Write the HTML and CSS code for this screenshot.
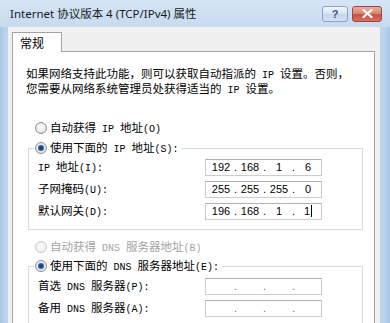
FILE: index.html
```html
<!DOCTYPE html>
<html lang="zh-CN">
<head>
<meta charset="utf-8">
<title>Internet 协议版本 4 (TCP/IPv4) 属性</title>
<link rel="stylesheet" href="styles.css">
</head>
<body>
<div class="win">
  <div class="titlebar">
    <span class="title">Internet 协议版本 4 (TCP/IPv4) 属性</span>
    <div class="tbtns">
      <span class="btn help">?</span>
      <span class="btn close"><svg width="11" height="9" viewBox="0 0 11 9"><path d="M1.5 1 L9.5 8 M9.5 1 L1.5 8" stroke="#fff" stroke-width="2.2" stroke-linecap="round"/></svg></span>
    </div>
  </div>
  <div class="body">
    <div class="tab">常规</div>
    <div class="panel">
      <p class="desc">如果网络支持此功能，则可以获取自动指派的<span class="en"> IP </span>设置。否则，<br>您需要从网络系统管理员处获得适当的<span class="en"> IP </span>设置。</p>
      <div class="opt first"><span class="radio"></span><span>自动获得<span class="en"> IP </span>地址<span class="en">(O)</span></span></div>
      <fieldset class="group">
        <legend><span class="radio on"></span><span>使用下面的<span class="en"> IP </span>地址<span class="en">(S):</span></span></legend>
        <div class="row"><span class="lbl"><span class="en">IP </span>地址<span class="en">(I):</span></span><div class="ip"><span class="o">192</span><span class="d">.</span><span class="o">168</span><span class="d">.</span><span class="o">1</span><span class="d">.</span><span class="o">6</span></div></div>
        <div class="row"><span class="lbl">子网掩码<span class="en">(U):</span></span><div class="ip"><span class="o">255</span><span class="d">.</span><span class="o">255</span><span class="d">.</span><span class="o">255</span><span class="d">.</span><span class="o">0</span></div></div>
        <div class="row"><span class="lbl">默认网关<span class="en">(D):</span></span><div class="ip"><span class="o">196</span><span class="d">.</span><span class="o">168</span><span class="d">.</span><span class="o">1</span><span class="d">.</span><span class="o">1<i class="caret"></i></span></div></div>
      </fieldset>
      <div class="opt disabled"><span class="radio off"></span><span>自动获得<span class="en"> DNS </span>服务器地址<span class="en">(B)</span></span></div>
      <fieldset class="group dns">
        <legend><span class="radio on"></span><span>使用下面的<span class="en"> DNS </span>服务器地址<span class="en">(E):</span></span></legend>
        <div class="row"><span class="lbl">首选<span class="en"> DNS </span>服务器<span class="en">(P):</span></span><div class="ip empty"><span class="o"></span><span class="d">.</span><span class="o"></span><span class="d">.</span><span class="o"></span><span class="d">.</span><span class="o"></span></div></div>
        <div class="row"><span class="lbl">备用<span class="en"> DNS </span>服务器<span class="en">(A):</span></span><div class="ip empty"><span class="o"></span><span class="d">.</span><span class="o"></span><span class="d">.</span><span class="o"></span><span class="d">.</span><span class="o"></span></div></div>
      </fieldset>
    </div>
  </div>
</div>
</body>
</html>
```
FILE: styles.css
```css
html, body {
  margin: 0;
  padding: 0;
}
body {
  width: 390px;
  height: 323px;
  overflow: hidden;
  background: #b9d1ea;
}
.win {
  width: 390px;
  height: 323px;
  display: flex;
  flex-direction: column;
  overflow: hidden;
  background: linear-gradient(90deg, #a9c5e6 0, #bcd3ec 6px, #c4d8ee 50%, #bcd3ec calc(100% - 6px), #a9c5e6 100%);
  font-family: "Noto Sans CJK SC", sans-serif;
  color: #000;
}
.en {
  font-family: "Liberation Mono", monospace;
  font-size: 10px;
  white-space: pre;
}
.titlebar {
  height: 27px;
  flex: none;
  display: flex;
  align-items: center;
  justify-content: space-between;
  padding: 0 8px 0 10px;
  background: linear-gradient(#d6e5f5, #c6daef);
}
.title {
  font: 11.5px/16px "Noto Sans", "Noto Sans CJK SC", sans-serif;
  color: #1b1b1b;
}
.tbtns {
  display: flex;
  gap: 4px;
}
.btn {
  height: 16px;
  box-sizing: border-box;
  border-radius: 3px;
  display: flex;
  align-items: center;
  justify-content: center;
}
.help {
  width: 26px;
  border: 1px solid #8ca2c0;
  background: linear-gradient(#eef4fb, #d9e5f3 50%, #c3d5ea 51%, #d3e1f1);
  color: #3d5679;
  font: bold 11px/14px "Liberation Sans", sans-serif;
}
.close {
  width: 30px;
  border: 1px solid #99473f;
  background: linear-gradient(#e9ada0, #d88273 50%, #c6513f 51%, #d6705c);
}
.body {
  flex: 1;
  margin: 0 10px 0 8px;
  background: #f0f0f0;
  padding: 5px 5px 0 4px;
  display: flex;
  flex-direction: column;
}
.tab {
  width: 50px;
  height: 20px;
  box-sizing: border-box;
  border: 1px solid #a3a3a3;
  border-bottom: none;
  background: #fff;
  margin-bottom: -1px;
  position: relative;
  z-index: 1;
  padding-left: 7px;
  font: 12px/19px "Noto Sans CJK SC", sans-serif;
}
.panel {
  flex: 1;
  background: #fff;
  border: 1px solid #a3a3a3;
  padding: 15px 11px 0 15px;
}
.desc {
  margin: 0 0 0 -2px;
  font-size: 11.5px;
  line-height: 12px;
  white-space: nowrap;
}
.opt {
  display: flex;
  align-items: center;
  height: 20px;
  padding-left: 7px;
  gap: 3px;
  font-size: 11.5px;
  line-height: 14px;
}
.opt.first {
  margin-top: 21px;
}
.opt.disabled {
  margin-top: 7px;
  color: #a3a3a3;
}
.radio {
  width: 12px;
  height: 12px;
  box-sizing: border-box;
  border-radius: 50%;
  border: 1px solid #8d8f92;
  background: radial-gradient(circle at 50% 45%, #ffffff 0, #ececec 55%, #d4d4d4 100%);
  flex: none;
}
.radio.on {
  background: radial-gradient(circle at 50% 50%, #16325c 0, #2c5890 2px, #5d8cc3 3px, rgba(255,255,255,0) 3.6px),
              radial-gradient(circle at 50% 45%, #ffffff 0, #ececec 55%, #d4d4d4 100%);
}
.radio.off {
  border-color: #c9cacc;
  background: radial-gradient(circle at 50% 45%, #fcfcfc 0, #f2f2f2 60%, #e8e8e8 100%);
}
.group {
  margin: 2px 0 0;
  border: 1px solid #d5dbe1;
  padding: 0 0 7px 5px;
  min-width: 0;
}
.group legend {
  padding: 0 3px 0 1px;
  height: 16px;
  display: flex;
  align-items: center;
  gap: 3px;
  font-size: 11.5px;
  line-height: 14px;
}
.group.dns {
  margin-top: 1px;
  padding-bottom: 5px;
}
.group.dns .row:first-of-type {
  margin-top: 1px;
}
.row {
  display: flex;
  align-items: center;
  height: 22px;
  padding-left: 4px;
  font-size: 11.5px;
  line-height: 14px;
}
.lbl {
  width: 167px;
  flex: none;
}
.ip {
  width: 117px;
  height: 17px;
  box-sizing: border-box;
  border: 1px solid #c9ccd1;
  border-top-color: #adb0b6;
  display: flex;
  align-items: center;
  padding-left: 2px;
  font: 11px/14px "Liberation Sans", sans-serif;
}
.o {
  width: 26px;
  display: flex;
  justify-content: center;
  align-items: center;
}
.d {
  width: 3px;
  text-align: center;
}
.ip.empty .d {
  color: #6a6a6a;
}
.caret {
  display: inline-block;
  width: 1px;
  height: 12px;
  margin-left: 1px;
  background: #000;
}
```
